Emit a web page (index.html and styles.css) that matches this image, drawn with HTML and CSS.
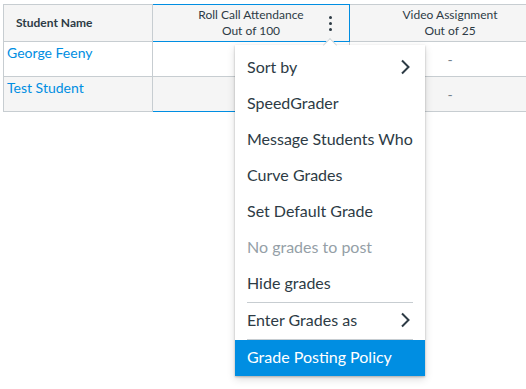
FILE: index.html
```html
<!DOCTYPE html>
<html lang="en">
<head>
    <meta charset="UTF-8">
    <meta name="viewport" content="width=device-width, initial-scale=1.0">
    <title>Gradebook</title>
    <link rel="stylesheet" href="styles.css">
</head>
<body>
    <div class="gradebook">
        <div class="grid-wrap">
            <div class="grid">
                <div class="cell head name-head">Student Name</div>
                <div class="cell head assign-head active">
                    <span class="assign-title">Roll Call Attendance<br>Out of 100</span>
                    <span class="kebab"><i></i><i></i><i></i></span>
                </div>
                <div class="cell head assign-head">
                    <span class="assign-title">Video Assignment<br>Out of 25</span>
                </div>

                <div class="cell"><a href="#" class="student">George Feeny</a></div>
                <div class="cell"></div>
                <div class="cell score">-</div>

                <div class="cell odd"><a href="#" class="student">Test Student</a></div>
                <div class="cell odd active-bottom"></div>
                <div class="cell odd score">-</div>
            </div>
        </div>

        <div class="menu">
            <span class="caret"></span>
            <div class="item">Sort by
                <svg class="chev" width="10" height="16" viewBox="0 0 10 16"><path d="M2 1.5 L8.5 8 L2 14.5" fill="none" stroke="#2d3b45" stroke-width="2"/></svg>
            </div>
            <div class="item">SpeedGrader</div>
            <div class="item">Message Students Who</div>
            <div class="item">Curve Grades</div>
            <div class="item">Set Default Grade</div>
            <div class="item disabled">No grades to post</div>
            <div class="item">Hide grades</div>
            <div class="sep"></div>
            <div class="item">Enter Grades as
                <svg class="chev" width="10" height="16" viewBox="0 0 10 16"><path d="M2 1.5 L8.5 8 L2 14.5" fill="none" stroke="#2d3b45" stroke-width="2"/></svg>
            </div>
            <div class="sep"></div>
            <div class="item selected">Grade Posting Policy</div>
        </div>
    </div>
</body>
</html>
```

FILE: styles.css
```css
html, body {
    height: 100%;
}
body {
    margin: 0;
    font-family: Lato, "Open Sans", sans-serif;
    color: #2d3b45;
    background: #fff;
}
.gradebook {
    position: relative;
    height: 100%;
    padding: 4px 0 0 3px;
    box-sizing: border-box;
}
.grid-wrap {
    overflow: hidden;
}
.grid {
    display: grid;
    grid-template-columns: 149px 197px 201px;
    grid-auto-rows: 35px;
    grid-template-rows: 37px;
    border-top: 1px solid #c7cdd1;
    border-left: 1px solid #c7cdd1;
    width: max-content;
}
.cell {
    border-right: 1px solid #c7cdd1;
    border-bottom: 1px solid #c7cdd1;
    background: #fff;
    padding: 2px 0 0 3px;
    font-size: 14px;
    line-height: 18px;
}
.cell.odd { background: #f5f5f5; }
.head {
    background: #f5f5f5;
    font-size: 12px;
    padding: 0;
}
.name-head {
    display: flex;
    align-items: center;
    padding-left: 12px;
    font-weight: bold;
}
.assign-head {
    display: grid;
    grid-template-columns: 1fr auto 1fr;
    align-items: center;
    line-height: 16px;
}
.assign-title {
    grid-column: 2;
    text-align: center;
}
.active {
    border: 1px solid #008ee2;
    border-left: none;
    margin-top: -1px;
}
.active-bottom { border-bottom-color: #008ee2; }
.kebab {
    grid-column: 3;
    justify-self: end;
    margin-right: 17px;
    display: flex;
    flex-direction: column;
    gap: 3px;
}
.kebab i {
    width: 3px;
    height: 3px;
    border-radius: 50%;
    background: #2d3b45;
}
.student {
    color: #008ee2;
    text-decoration: none;
}
.score {
    text-align: center;
    color: #73818c;
    padding: 9px 0 0;
}

.menu {
    position: absolute;
    left: 235px;
    top: 45px;
    width: 190px;
    padding-top: 5px;
    background: #fff;
    box-shadow: 0 1px 2px rgba(0, 0, 0, 0.25), 0 3px 8px rgba(0, 0, 0, 0.15);
}
.caret {
    position: absolute;
    left: 90px;
    top: -5px;
    width: 9px;
    height: 9px;
    background: #fff;
    border-top: 1px solid #d3d8db;
    border-left: 1px solid #d3d8db;
    transform: rotate(45deg);
}
.item {
    display: flex;
    justify-content: space-between;
    align-items: center;
    box-sizing: border-box;
    height: 36px;
    padding: 0 15px 2px 12px;
    font-size: 16px;
    line-height: 34px;
    white-space: nowrap;
}
.item.disabled { color: #959fa7; }
.item.selected {
    background: #008ee2;
    color: #fff;
}
.sep {
    height: 1px;
    margin: 0 12px;
    background: #c7cdd1;
}
```
